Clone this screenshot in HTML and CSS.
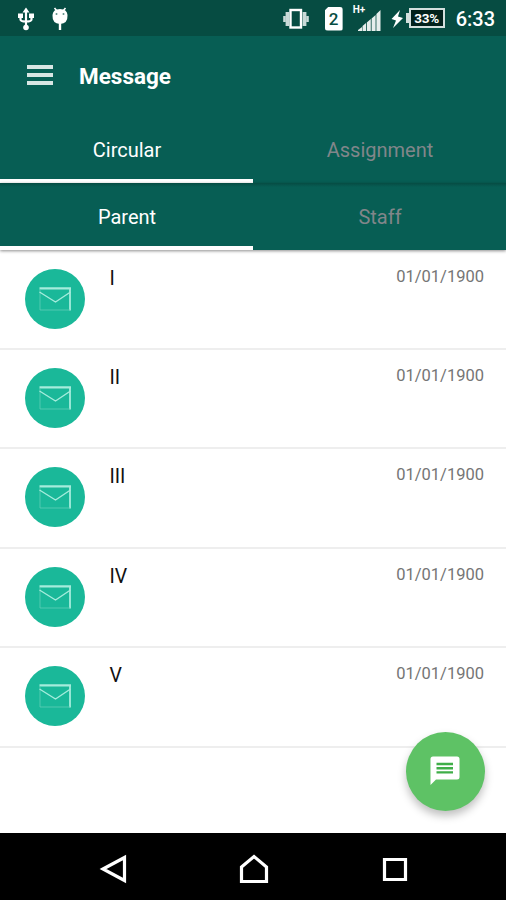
FILE: index.html
```html
<!DOCTYPE html>
<html lang="en">
<head>
  <meta charset="UTF-8">
  <meta name="viewport" content="width=device-width, initial-scale=1.0">
  <title>Message</title>
  <link rel="stylesheet" href="styles.css">
</head>
<body>

<svg class="sprite" width="0" height="0">
  <symbol id="mail" viewBox="0 0 60 60">
    <path d="M14.500 19.300H46" stroke="#a5ecdc" stroke-width="2.2"/>
    <path d="M45 19V41.500" stroke="#a5ecdc" stroke-width="1.800"/>
    <path d="M15 20V41H45" stroke="#5fceb6" stroke-width=".8"/>
    <path d="M14.500 23L30.500 33L45.500 23" stroke="#a5ecdc" stroke-width="1.4"/>
  </symbol>
</svg>

<div class="status-bar">
  <div class="status-left">
    <svg width="18" height="24" viewBox="0 0 18 24">
      <path d="M9 3V20M3.500 9V12.500Q3.500 14.500 9 14.500M14.500 9V12.500Q14.500 14.500 9 14.500" fill="none" stroke="#fff" stroke-width="2.200"/>
      <path d="M9 0.500L12.500 5.500H5.500Z M1 6.500H6V11H1Z M12 6.500H17V11H12Z" fill="#fff"/>
      <circle cx="9" cy="20.500" r="2.800" fill="#fff"/>
    </svg>
    <svg width="18" height="24" viewBox="0 0 18 24">
      <path d="M3.500 1L6 4M14.500 1L12 4" stroke="#fff" stroke-width="1.6"/>
      <path d="M9 15V23" stroke="#fff" stroke-width="2.400"/>
      <path d="M1.500 8Q2 2 9 2T16.500 8Q17 16.500 9 17Q1 16.500 1.500 8Z" fill="#fff"/>
      <circle cx="5.500" cy="7" r="1" fill="#5e8f87"/>
      <circle cx="12.500" cy="7" r="1" fill="#5e8f87"/>
    </svg>
  </div>
  <div class="status-right">
    <svg width="28" height="22" viewBox="0 0 28 22">
      <rect x="8.500" y="2" width="10.500" height="17.500" fill="none" stroke="#fff" stroke-width="2.400"/>
      <path d="M5.500 4V18M22.500 4V18" stroke="#c9d9d7" stroke-width="3.800"/>
      <path d="M2.500 8V14M25.500 8V14" stroke="#c9d9d7" stroke-width="2.600"/>
    </svg>
    <div class="sim">2</div>
    <div class="signal">
      <span class="signal-type">H+</span>
      <svg width="23" height="21" viewBox="0 0 23 21">
        <path d="M0 21V20L4 17V21Z M4.500 21V16L8 13V21Z M8.800 21V12.500L12.800 9V21Z M13.600 21V8.500L17.600 5V21Z M18.400 21V4L22.500 0V21Z" fill="#e6eeec"/>
      </svg>
    </div>
    <svg class="bolt" width="12" height="18" viewBox="0 0 12 18">
      <path d="M9 0L0.500 9L5 10.500L2 18L12 8L7 6.500Z" fill="#fff"/>
    </svg>
    <div class="battery">33%</div>
    <div class="clock">6:33</div>
  </div>
</div>

<header class="toolbar">
  <div class="menu">
    <span></span>
    <span></span>
    <span></span>
  </div>
  <h1>Message</h1>
</header>

<div class="tabs">
  <div class="tab active">Circular</div>
  <div class="tab">Assignment</div>
</div>
<div class="tabs tabs-sub">
  <div class="tab active">Parent</div>
  <div class="tab">Staff</div>
</div>

<main class="list">
  <div class="row">
    <svg class="avatar"><use href="#mail"/></svg>
    <div class="name">I</div>
    <div class="date">01/01/1900</div>
  </div>
  <div class="row">
    <svg class="avatar"><use href="#mail"/></svg>
    <div class="name">II</div>
    <div class="date">01/01/1900</div>
  </div>
  <div class="row">
    <svg class="avatar"><use href="#mail"/></svg>
    <div class="name">III</div>
    <div class="date">01/01/1900</div>
  </div>
  <div class="row">
    <svg class="avatar"><use href="#mail"/></svg>
    <div class="name">IV</div>
    <div class="date">01/01/1900</div>
  </div>
  <div class="row">
    <svg class="avatar"><use href="#mail"/></svg>
    <div class="name">V</div>
    <div class="date">01/01/1900</div>
  </div>

  <div class="fab">
    <svg width="30" height="30" viewBox="0 0 30 30">
      <path d="M3 0.500H27Q29.500 0.500 29.500 3V21Q29.500 23.500 27 23.500H6L0.500 29V3Q0.500 0.500 3 0.500Z" fill="#fff"/>
      <path d="M6.500 8H23M6.500 12.200H23M6.500 16.400H23" stroke="#3fae48" stroke-width="2.400"/>
    </svg>
  </div>
</main>

<nav class="nav-bar">
  <svg width="30" height="30" viewBox="0 0 30 30">
    <path d="M4 15L25.500 3.500V26.500Z"/>
  </svg>
  <svg width="30" height="30" viewBox="0 0 30 30">
    <path d="M2.500 27.500V13L15 2.500L27.500 13V27.500Z"/>
  </svg>
  <svg width="30" height="30" viewBox="0 0 30 30">
    <path d="M4.500 5.500H25.500V25.500H4.500Z"/>
  </svg>
</nav>

</body>
</html>
```
FILE: styles.css
```css
* {
  box-sizing: border-box;
}

body {
  margin: 0;
  height: 900px;
  display: flex;
  flex-direction: column;
  background: #fff;
  font-family: Roboto, sans-serif;
  overflow: hidden;
}

svg {
  display: block;
  flex: none;
}

.sprite {
  position: absolute;
}

/* status bar */
.status-bar {
  height: 36px;
  flex: none;
  display: flex;
  justify-content: space-between;
  align-items: center;
  padding: 1px 11px 0 17px;
  background: #064c42;
  color: #fff;
}

.status-left {
  display: flex;
  gap: 16px;
}

.status-right {
  display: flex;
  align-items: center;
}

.sim {
  width: 18px;
  height: 24px;
  margin-left: 15px;
  border-radius: 3px;
  background: #fff;
  clip-path: polygon(4px 0, 100% 0, 100% 100%, 0 100%, 0 4px);
  color: #064c42;
  font-size: 17px;
  font-weight: 500;
  line-height: 25px;
  text-align: center;
}

.signal {
  position: relative;
  margin-left: 15px;
  padding-top: 3px;
}

.signal-type {
  position: absolute;
  left: -5px;
  top: -2px;
  font-size: 10px;
  font-weight: 700;
  line-height: 10px;
}

.bolt {
  margin-left: 10px;
}

.battery {
  position: relative;
  width: 36px;
  height: 20px;
  margin: -1px 0 0 6px;
  border: 2px solid #d3dfdd;
  font-size: 13.5px;
  font-weight: 700;
  line-height: 17px;
  letter-spacing: -0.3px;
  text-align: center;
  background: #02211c;
}

.battery::before {
  content: "";
  position: absolute;
  left: -5px;
  top: 3px;
  width: 3px;
  height: 10px;
  background: #d3dfdd;
}

.clock {
  margin-left: 11px;
  font-size: 20px;
  font-weight: 500;
}

/* toolbar */
.toolbar {
  height: 80px;
  flex: none;
  display: flex;
  align-items: center;
  padding-left: 27px;
  background: #075e54;
  color: #fff;
}

.menu {
  width: 26px;
  display: flex;
  flex-direction: column;
  gap: 4px;
  margin: -2px 26px 0 0;
}

.menu span {
  height: 4px;
  background: #d8e6e4;
}

.toolbar h1 {
  margin: 0;
  font-size: 22.5px;
  font-weight: 700;
}

/* tabs */
.tabs {
  height: 67px;
  flex: none;
  display: flex;
  background: #075e54;
}

.tabs-sub {
  background: linear-gradient(#064c43, #075e54 4px);
  box-shadow: 0 1px 3px rgba(0, 0, 0, 0.45);
}

.tab {
  flex: 1;
  height: 67px;
  padding-left: 1px;
  border-bottom: 4px solid transparent;
  color: #81868a;
  font-size: 20px;
  line-height: 68px;
  text-align: center;
}

.tab.active {
  border-bottom-color: #fff;
  color: #fff;
}

/* messages */
.list {
  position: relative;
  flex: 1;
  padding-top: 0.6px;
}

.row {
  height: 99.4px;
  display: flex;
  align-items: flex-start;
  padding: 18px 22px 0 25px;
  border-bottom: 2px solid #eee;
}

.avatar {
  width: 60px;
  height: 60px;
  border-radius: 50%;
  background: #1ab899;
  fill: none;
}

.name {
  flex: 1;
  margin-left: 24.5px;
  color: #111;
  font-size: 19.5px;
  line-height: 20px;
}

.date {
  color: #757575;
  font-size: 16.5px;
  line-height: 16px;
}

.fab {
  position: absolute;
  right: 21.5px;
  bottom: 22.5px;
  width: 79px;
  height: 79px;
  display: flex;
  align-items: center;
  justify-content: center;
  border-radius: 50%;
  background: #5ec265;
  box-shadow: 0 5px 8px rgba(0, 0, 0, 0.25);
}

/* navigation bar */
.nav-bar {
  height: 67px;
  flex: none;
  display: flex;
  align-items: center;
  justify-content: center;
  gap: 110.5px;
  padding: 5px 0 0 2px;
  background: #000;
}

.nav-bar path {
  fill: none;
  stroke: #fff;
  stroke-width: 3.2;
}
```
